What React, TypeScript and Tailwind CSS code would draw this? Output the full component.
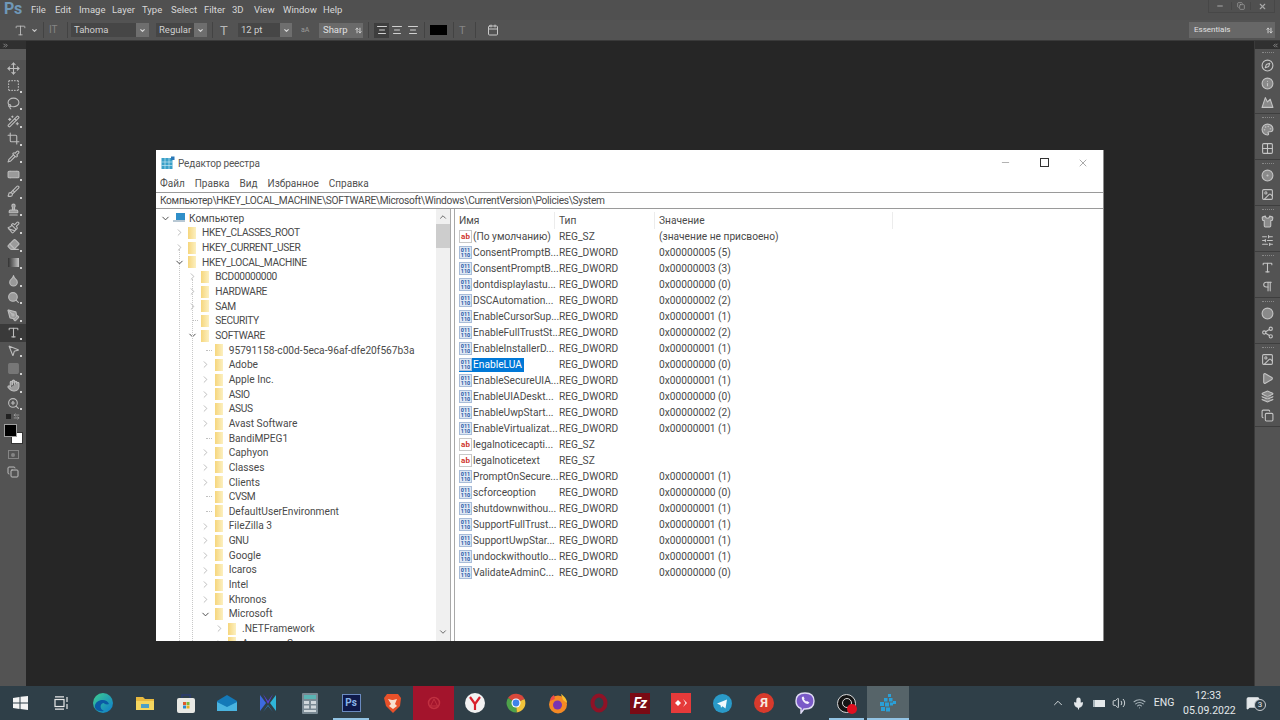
import React from "react";
import {
  Move, SquareDashed, Lasso, Wand2, Crop, Pipette, Bandage, Brush, Stamp, Paintbrush, Eraser, Droplet, PenTool, Type, MousePointer2, Hand, ZoomIn, Search,
  ChevronRight, ChevronDown, ChevronUp, Minus, Square, X, ChevronsLeft, ChevronsRight, ArrowLeftRight, Compass, Info, Mountain, Palette, Grid2x2, CircleDot, Image, Shirt, SlidersHorizontal, AlignCenter, Pilcrow, Circle, Share2, Play, Layers, Copy, Mic, Volume2, Wifi, MessageSquare, Calendar, ArrowUpDown
} from "lucide-react";

const menus = [
  ["File", "w-[24px]"], ["Edit", "w-[24px]"], ["Image", "w-[33px]"], ["Layer", "w-[30px]"], ["Type", "w-[29px]"], ["Select", "w-[33px]"], ["Filter", "w-[28px]"], ["3D", "w-[22px]"], ["View", "w-[29px]"], ["Window", "w-[40px]"], ["Help", "w-[30px]"],
];

function PsLogo() {
  return <span className="text-[#6f98b8] text-[16px] font-bold leading-none tracking-tight">Ps</span>;
}

function MenuBar() {
  return (
    <div className="h-[20px] bg-[#505050] flex items-center text-[9.5px] text-[#d8d8d8] shrink-0">
      <div className="w-[31px] pl-[4px]"><PsLogo /></div>
      {menus.map(([m, w]) => <span key={m} className={w}>{m}</span>)}
      <div className="ml-auto mr-[5px] self-start h-[13px] w-[67px] flex items-center border border-t-0 border-[#474747] text-[#a8a8a8]">
        <span className="w-[22px] flex justify-center"><Minus size={8} strokeWidth={3} /></span>
        <span className="w-[20px] flex justify-center border-x border-[#474747]"><Copy size={8} strokeWidth={2} /></span>
        <span className="flex-1 flex justify-center"><X size={9} strokeWidth={3} /></span>
      </div>
    </div>
  );
}

function Sel({ label, w, btn }: { label: string; w: string; btn: string }) {
  return (
    <div className={`${w} h-[14px] bg-[#464646] flex items-center text-[9.5px] text-[#d0d0d0]`}>
      <span className="pl-[3px] flex-1">{label}</span>
      <span className={`${btn} h-[14px] bg-[#6e6e6e] flex items-center justify-center`}>
        <ChevronDown size={7} strokeWidth={4} className="text-[#d8d8d8]" />
      </span>
    </div>
  );
}

function Sep({ cls }: { cls: string }) {
  return <div className={`w-px h-[16px] bg-[#434343] ${cls}`} />;
}

function OptionsBar() {
  return (
    <div className="h-[21px] bg-[#535353] flex items-center shrink-0 border-b border-[#3a3a3a]">
      <Type size={13} className="ml-[14px] text-[#c8c8c8]" strokeWidth={1.5} />
      <ChevronDown size={7} strokeWidth={4} className="ml-[4px] text-[#c8c8c8]" />
      <Sep cls="ml-[5px]" />
      <span className="ml-[5px] text-[#858585] text-[10px] w-[14px] leading-none">IT</span>
      <Sep cls="ml-[4px]" />
      <div className="ml-[3px]"><Sel label="Tahoma" w="w-[78px]" btn="w-[13px]" /></div>
      <div className="ml-[7px]"><Sel label="Regular" w="w-[51px]" btn="w-[13px]" /></div>
      <Sep cls="ml-[5px]" />
      <span className="ml-[7px] text-[#b8b8b8] text-[13px] leading-none w-[12px]">T</span>
      <div className="ml-[6px]"><Sel label="12 pt" w="w-[54px]" btn="w-[12px]" /></div>
      <span className="ml-[9px] text-[#9a9a9a] text-[7px] w-[10px]">aA</span>
      <div className="ml-[8px] w-[44px] h-[15px] bg-[#6a6a6a] flex items-center text-[9.5px] text-[#e0e0e0] pl-[4px]">
        <span className="flex-1">Sharp</span>
        <ArrowUpDown size={7} className="mr-[1px]" strokeWidth={3} />
      </div>
      <Sep cls="ml-[5px]" />
      <span className="ml-[5px] w-[15px] h-[15px] bg-[#3e3e3e] flex items-center justify-center"><AlignCenter size={12} className="text-[#d0d0d0]" /></span>
      <AlignCenter size={12} className="ml-[2px] text-[#d0d0d0]" />
      <AlignCenter size={12} className="ml-[4px] text-[#d0d0d0]" />
      <Sep cls="ml-[5px]" />
      <div className="ml-[5px] w-[17px] h-[10px] bg-black" />
      <Sep cls="ml-[6px]" />
      <span className="ml-[5px] text-[#858585] text-[11px] w-[10px] leading-none">T</span>
      <Sep cls="ml-[6px]" />
      <Calendar size={12} className="ml-[11px] text-[#c8c8c8]" />
      <div className="ml-auto mr-[5px] w-[86px] h-[16px] bg-[#676767] flex items-center text-[8px] text-[#e0e0e0] pl-[5px]">
        <span className="flex-1">Essentials</span>
        <ArrowUpDown size={7} className="mr-[2px]" strokeWidth={3} />
      </div>
    </div>
  );
}

const toolIcons = [Move, SquareDashed, Lasso, Wand2, Crop, Pipette, Bandage, Brush, Stamp, Paintbrush, Eraser, null, Droplet, Search, PenTool, Type, MousePointer2, Square, Hand, ZoomIn];
const filledTools = [6, 8, 10, 12, 13, 14, 18];

function LeftBar() {
  return (
    <div className="w-[26px] bg-[#535353] shrink-0 flex flex-col items-center">
      <div className="h-[8px] w-full bg-[#303030] flex items-center pl-[2px]"><ChevronsRight size={7} className="text-[#c0c0c0]" /></div>
      <div className="h-[10.5px] w-full bg-[#5a5a5a] shrink-0" />
      {toolIcons.map((I, i) => (
        <div key={i} className={`relative h-[17.65px] w-full flex items-center justify-center shrink-0 ${i === 15 ? "bg-[#3a3a3a]" : ""}`}>
          {I ? <I size={13} strokeWidth={2} className={i === 17 ? "text-[#777777] fill-[#777777]" : filledTools.includes(i) ? "text-[#bdbdbd] fill-[#9a9a9a]" : "text-[#bdbdbd]"} /> : <div className="w-[11px] h-[9px] bg-gradient-to-r from-[#333333] to-[#c8c8c8]" />}
          {i > 0 && <div className="absolute right-[4px] bottom-[2px] w-[2px] h-[2px] bg-[#d0d0d0]" />}
        </div>
      ))}
      <div className="h-[9px] w-full flex items-center justify-center gap-[2px] shrink-0"><div className="w-[5px] h-[5px] bg-[#222222]" /><ArrowLeftRight size={7} className="text-[#c0c0c0]" /></div>
      <div className="relative w-[22px] h-[20px] mt-[3px] shrink-0">
        <div className="absolute left-[9px] bottom-0 w-[12px] h-[12px] bg-white border border-[#333333]" />
        <div className="absolute left-[2px] top-0 w-[13px] h-[13px] bg-black border border-[#a0a0a0]" />
      </div>
      <div className="mt-[6px] w-[11px] h-[9px] border border-[#858585] flex items-center justify-center shrink-0"><div className="w-[4px] h-[4px] rounded-full bg-[#858585]" /></div>
      <Copy size={12} className="mt-[7px] text-[#bdbdbd] shrink-0" />
    </div>
  );
}

const rightGroups: [typeof Info, boolean][][] = [
  [[Compass, false], [Info, true], [Mountain, true]],
  [[Palette, true], [Grid2x2, false]],
  [[CircleDot, true], [Image, false]],
  [[Shirt, true], [SlidersHorizontal, false]],
  [[Type, false], [Pilcrow, false]],
  [[Circle, true], [Share2, false]],
  [[Image, false], [Play, true], [Layers, true], [Copy, false]],
];

function RightBar() {
  return (
    <div className="w-[26px] bg-[#535353] shrink-0 flex flex-col items-center border-l border-[#3a3a3a]">
      <div className="h-[8px] w-full bg-[#303030] flex items-center justify-end pr-[1px] shrink-0"><ChevronsLeft size={7} className="text-[#c0c0c0]" /></div>
      {rightGroups.map((g, i) => (
        <div key={i} className="w-full border-b border-[#3e3e3e] flex flex-col items-center pt-[3px] pb-[1px]">
          <div className="w-[12px] h-[2px] border-t border-dotted border-[#888888] mb-[2px]" />
          {g.map(([I, filled], j) => (
            <div key={j} className="h-[18.5px] flex items-center justify-center">
              <I size={13} className={filled ? "text-[#c4c4c4] fill-[#8a8a8a]" : "text-[#c4c4c4]"} strokeWidth={2} />
            </div>
          ))}
        </div>
      ))}
    </div>
  );
}

const tree: [number, "r" | "d" | "n", string][] = [
  [1, "r", "HKEY_CLASSES_ROOT"], [1, "r", "HKEY_CURRENT_USER"], [1, "d", "HKEY_LOCAL_MACHINE"],
  [2, "r", "BCD00000000"], [2, "r", "HARDWARE"], [2, "r", "SAM"], [2, "n", "SECURITY"], [2, "d", "SOFTWARE"],
  [3, "n", "95791158-c00d-5eca-96af-dfe20f567b3a"], [3, "r", "Adobe"], [3, "r", "Apple Inc."], [3, "r", "ASIO"], [3, "r", "ASUS"], [3, "r", "Avast Software"], [3, "n", "BandiMPEG1"], [3, "r", "Caphyon"], [3, "r", "Classes"], [3, "r", "Clients"], [3, "n", "CVSM"], [3, "n", "DefaultUserEnvironment"], [3, "r", "FileZilla 3"], [3, "r", "GNU"], [3, "r", "Google"], [3, "r", "Icaros"], [3, "r", "Intel"], [3, "r", "Khronos"], [3, "d", "Microsoft"],
  [4, "r", ".NETFramework"], [4, "r", "Accessor Source"],
];
const levelPad = ["pl-[2px]", "pl-[16px]", "pl-[29.3px]", "pl-[42.7px]", "pl-[56px]"];

function Folder() {
  return <div className="ml-[2px] w-[8px] h-[12px] shrink-0 bg-gradient-to-r from-[#f6d67c] to-[#fcf0c0]" />;
}

function TreeRow({ level, mark, label }: { level: number; mark: "r" | "d" | "n"; label: string }) {
  return (
    <div className={`h-[14.67px] flex items-center ${levelPad[level]}`}>
      <span className="w-[14px] flex justify-center shrink-0">
        {mark === "r" && <ChevronRight size={11} strokeWidth={1.5} className="text-[#a0a0a0]" />}
        {mark === "d" && <ChevronDown size={11} strokeWidth={2} className="text-[#404040]" />}
        {mark === "n" && <span className="w-[6px] ml-[6px] border-t border-dotted border-[#c0c0c0]" />}
      </span>
      <Folder />
      <span className={`ml-[6px] whitespace-nowrap ${label === label.toUpperCase() ? "tracking-[-0.35px]" : ""}`}>{label}</span>
    </div>
  );
}

function Tree() {
  return (
    <div className="w-[280px] relative overflow-hidden pt-[2px] text-[10.2px] text-[#4a4a4a]">
      <div className="absolute left-[23px] top-[40px] bottom-0 border-l border-dotted border-[#c8c8c8]" />
      <div className="absolute left-[36px] top-[70px] bottom-0 border-l border-dotted border-[#c8c8c8]" />
      <div className="h-[14.67px] flex items-center pl-[2px]">
        <span className="w-[14px] flex justify-center"><ChevronDown size={11} strokeWidth={2} className="text-[#404040]" /></span>
        <svg width="14" height="12" viewBox="0 0 14 12" className="shrink-0"><rect x="4" y="1" width="9" height="7" fill="#2f8fc9" /><rect x="1" y="8" width="12" height="2" fill="#b8c8d4" /></svg>
        <span className="ml-[3px]">Компьютер</span>
      </div>
      {tree.map(([l, m, t]) => <TreeRow key={t} level={l} mark={m} label={t} />)}
    </div>
  );
}

function Scrollbar() {
  return (
    <div className="w-[14px] bg-[#f0f0f0] flex flex-col items-center shrink-0">
      <ChevronUp size={10} strokeWidth={2} className="text-[#505050] mt-[3px] mb-[2px]" />
      <div className="w-full h-[24px] bg-[#cdcdcd]" />
      <ChevronDown size={10} strokeWidth={2} className="text-[#505050] mt-auto mb-[4px]" />
    </div>
  );
}

const values: [string, string, string, string?][] = [
  ["ab", "(По умолчанию)", "REG_SZ", "(значение не присвоено)"],
  ["b", "ConsentPromptB...", "REG_DWORD", "0x00000005 (5)"],
  ["b", "ConsentPromptB...", "REG_DWORD", "0x00000003 (3)"],
  ["b", "dontdisplaylastu...", "REG_DWORD", "0x00000000 (0)"],
  ["b", "DSCAutomation...", "REG_DWORD", "0x00000002 (2)"],
  ["b", "EnableCursorSup...", "REG_DWORD", "0x00000001 (1)"],
  ["b", "EnableFullTrustSt...", "REG_DWORD", "0x00000002 (2)"],
  ["b", "EnableInstallerD...", "REG_DWORD", "0x00000001 (1)"],
  ["s", "EnableLUA", "REG_DWORD", "0x00000000 (0)"],
  ["b", "EnableSecureUIA...", "REG_DWORD", "0x00000001 (1)"],
  ["b", "EnableUIADeskt...", "REG_DWORD", "0x00000000 (0)"],
  ["b", "EnableUwpStart...", "REG_DWORD", "0x00000002 (2)"],
  ["b", "EnableVirtualizat...", "REG_DWORD", "0x00000001 (1)"],
  ["ab", "legalnoticecapti...", "REG_SZ"],
  ["ab", "legalnoticetext", "REG_SZ"],
  ["b", "PromptOnSecure...", "REG_DWORD", "0x00000001 (1)"],
  ["b", "scforceoption", "REG_DWORD", "0x00000000 (0)"],
  ["b", "shutdownwithou...", "REG_DWORD", "0x00000001 (1)"],
  ["b", "SupportFullTrust...", "REG_DWORD", "0x00000001 (1)"],
  ["b", "SupportUwpStar...", "REG_DWORD", "0x00000001 (1)"],
  ["b", "undockwithoutlo...", "REG_DWORD", "0x00000001 (1)"],
  ["b", "ValidateAdminC...", "REG_DWORD", "0x00000000 (0)"],
];

function RegIcon({ kind }: { kind: string }) {
  if (kind === "ab") {
    return <span className="w-[13px] h-[13px] shrink-0 border border-[#c8c8c8] bg-white text-[#d0342c] text-[8px] font-bold leading-[11px] text-center">ab</span>;
  }
  return (
    <span className="w-[13px] h-[13px] shrink-0 border border-[#a8bcd8] bg-[#dfe8f4] text-[#2a5aa8] text-[5.5px] font-bold leading-[5.5px] text-center overflow-hidden pt-[0.5px]">
      011<br />110
    </span>
  );
}

function ValueList() {
  return (
    <div className="flex-1 min-w-0 text-[10.2px] text-[#4a4a4a] pt-[3px] overflow-hidden">
      <div className="h-[16.5px] flex items-center">
        <span className="w-[100px] pl-[4px] h-full flex items-center border-r border-[#ececec]">Имя</span>
        <span className="w-[100px] pl-[4px] h-full flex items-center border-r border-[#ececec]">Тип</span>
        <span className="w-[238px] pl-[4px] h-full flex items-center border-r border-[#ececec]">Значение</span>
      </div>
      {values.map(([k, n, t, v], i) => (
        <div key={i} className="h-[16px] flex items-center">
          <div className="w-[100px] pl-[4px] flex items-center shrink-0">
            <div className={`flex items-center h-[14px] ${k === "s" ? "bg-[#0078d7] text-white pr-[2px]" : ""}`}>
              <RegIcon kind={k} />
              <span className="ml-[1px] whitespace-nowrap">{n}</span>
            </div>
          </div>
          <span className="w-[100px] pl-[4px] shrink-0">{t}</span>
          <span className="pl-[4px] whitespace-nowrap">{v}</span>
        </div>
      ))}
    </div>
  );
}

function RegWindow() {
  return (
    <div className="ml-[130px] mt-[109px] w-[948px] h-[491px] bg-white flex flex-col text-[#404040] border-r border-[#8a8a8a]">
      <div className="h-[25px] flex items-center shrink-0">
        <svg width="14" height="14" viewBox="0 0 14 14" className="ml-[5px]">
          <rect x="0.5" y="2" width="11" height="11" fill="#3aa0c8" />
          <path d="M0.5 6h11M0.5 9.500h11M4 2v11M8 2v11" stroke="#d8f0f8" strokeWidth="0.6" />
          <rect x="10" y="0.500" width="3.500" height="3.500" fill="#2a78b8" />
        </svg>
        <span className="ml-[3px] pt-[1px] text-[10px] tracking-[-0.15px] text-[#555555]">Редактор реестра</span>
        <div className="ml-auto flex items-center text-[#555555]">
          <Minus size={11} strokeWidth={1} className="mr-[29px]" />
          <div className="w-[9px] h-[9px] border border-[#333333] mr-[28px]" />
          <X size={12} strokeWidth={1} className="mr-[14px]" />
        </div>
      </div>
      <div className="h-[17px] flex items-center pl-[4px] gap-[10px] text-[10px] text-[#505050] shrink-0">
        <span>Файл</span><span>Правка</span><span>Вид</span><span>Избранное</span><span>Справка</span>
      </div>
      <div className="h-[17px] flex items-center pl-[4px] text-[10.2px] tracking-[-0.3px] text-[#4a4a4a] border-y border-[#9a9a9a] shrink-0 whitespace-nowrap">
        Компьютер\HKEY_LOCAL_MACHINE\SOFTWARE\Microsoft\Windows\CurrentVersion\Policies\System
      </div>
      <div className="flex-1 flex min-h-0">
        <Tree />
        <Scrollbar />
        <div className="w-[5px] bg-white border-x border-[#a8a8a8] shrink-0" />
        <ValueList />
      </div>
    </div>
  );
}

function Edge() {
  return <svg width="22" height="22" viewBox="0 0 22 22"><defs><linearGradient id="e1" x1="0" y1="0" x2="1" y2="1"><stop offset="0" stopColor="#3ecf8e" /><stop offset="1" stopColor="#0c79d0" /></linearGradient></defs><circle cx="11" cy="11" r="10" fill="url(#e1)" /><path d="M3 13c2-6 12-7 14-1-2 1-5 0-5-1-4 0-5 6 0 8-6 1-10-2-9-6z" fill="#0b5aa5" /></svg>;
}
function Explorer() {
  return <svg width="20" height="18" viewBox="0 0 20 18"><path d="M1 3h7l2 2h9v11H1z" fill="#e8b93f" /><rect x="1" y="7" width="18" height="9" fill="#f5d65f" /><rect x="6" y="10" width="8" height="4" fill="#4da0c8" /></svg>;
}
function Store() {
  return <svg width="20" height="21" viewBox="0 0 20 21"><path d="M6 5V2h8v3" fill="none" stroke="#2a3a70" strokeWidth="1.400" /><rect x="1" y="5" width="18" height="15" rx="2" fill="#e8e8e4" /><rect x="7" y="9" width="3" height="3" fill="#e05a2c" /><rect x="10.500" y="9" width="3" height="3" fill="#7db83a" /><rect x="7" y="12.500" width="3" height="3" fill="#2a8ad0" /><rect x="10.500" y="12.500" width="3" height="3" fill="#e8b020" /></svg>;
}
function Mail() {
  return <svg width="22" height="18" viewBox="0 0 22 18"><path d="M1 7L11 1l10 6v10H1z" fill="#1479b8" /><path d="M1 8l10 5 10-5v9H1z" fill="#4ab4e0" /></svg>;
}
function VS() {
  return <svg width="18" height="20" viewBox="0 0 18 20"><path d="M1 2l6 8-6 8z" fill="#3d6be0" /><path d="M17 2l-6 8 6 8z" fill="#2fb5d8" /><path d="M4 1l5 7 5-7-5 10z" fill="#5a3fd0" /><path d="M4 19l5-7 5 7-5-6z" fill="#2a8ad0" /></svg>;
}
function Calc() {
  return <svg width="16" height="21" viewBox="0 0 16 21"><rect width="16" height="21" rx="1" fill="#7a8a94" /><rect x="2" y="2" width="12" height="4" fill="#5ab4b4" /><rect x="2" y="8" width="5" height="3" fill="#d0d8dc" /><rect x="9" y="8" width="5" height="3" fill="#d0d8dc" /><rect x="2" y="12.500" width="5" height="3" fill="#d0d8dc" /><rect x="9" y="12.500" width="5" height="3" fill="#d0d8dc" /><rect x="2" y="17" width="12" height="2" fill="#d0d8dc" /></svg>;
}
function PsIcon() {
  return <div className="w-[19px] h-[18px] bg-[#0f1a4a] border border-[#6a8ac0] text-[#8ab4e8] text-[10px] font-bold leading-[16px] text-center">Ps</div>;
}
function Brave() {
  return <svg width="17" height="20" viewBox="0 0 17 20"><path d="M3 1h11l3 4-1 8-7 7-7-7-2-8z" fill="#e8512a" /><path d="M4 6l4 1 1 0 4-1-2 5 2 2-4 3-4-3 2-2z" fill="#f8e0d0" /></svg>;
}
function RedBlock() {
  return <svg width="14" height="14" viewBox="0 0 14 14"><circle cx="7" cy="7" r="5.500" fill="none" stroke="#c03040" strokeWidth="1.500" /><path d="M7 3L3.500 10h7z" fill="none" stroke="#c03040" /></svg>;
}
function Yandex() {
  return <svg width="20" height="20" viewBox="0 0 20 20"><circle cx="10" cy="10" r="10" fill="#f2f2f2" /><path d="M5 4l5 7 5-7M10 11v6" fill="none" stroke="#d9202c" strokeWidth="2.200" /></svg>;
}
function Chrome() {
  return <svg width="20" height="20" viewBox="0 0 20 20"><path d="M10 10L2 5A9.500 9.500 0 0 1 18.500 6z" fill="#d9483b" /><path d="M10 10l8.500-4a9.500 9.500 0 0 1-8 13.500z" fill="#f2c43a" /><path d="M10 10l.5 9.500A9.500 9.500 0 0 1 2 5z" fill="#4ea24a" /><circle cx="10" cy="10" r="4.500" fill="#fff" /><circle cx="10" cy="10" r="3.400" fill="#3f83e8" /></svg>;
}
function Firefox() {
  return <svg width="20" height="21" viewBox="0 0 20 21"><circle cx="10" cy="11.500" r="9" fill="#f58a24" /><path d="M13 1c3 2 6 5 6 9l-4-3z" fill="#f8c030" /><circle cx="9.500" cy="12" r="4.500" fill="#7a35b0" /><path d="M2 8c0-3 2-5 4-6l1 4z" fill="#f04a4a" /></svg>;
}
function Opera() {
  return <svg width="20" height="20" viewBox="0 0 20 20"><ellipse cx="10" cy="10" rx="6.500" ry="7.500" fill="none" stroke="#8f1226" strokeWidth="4" /></svg>;
}
function Fz() {
  return <div className="w-[20px] h-[21px] bg-[#7a0a14] text-white text-[14px] font-bold italic leading-[20px] text-center tracking-tighter">Fz</div>;
}
function AnyDesk() {
  return <svg width="20" height="20" viewBox="0 0 20 20"><rect width="20" height="20" fill="#e53a3a" /><path d="M7 7l3 3-3 3-3-3z" fill="#fff" /><path d="M12 6l4 4-4 4 2.500-4z" fill="#fff" /></svg>;
}
function Telegram() {
  return <svg width="19" height="19" viewBox="0 0 19 19"><circle cx="9.500" cy="9.500" r="9.500" fill="#2a9ac8" /><path d="M4 9.500l10-4-1.500 9-3-2.200-1.500 1.500-.5-2.500z" fill="#f0f8fc" /></svg>;
}
function Ya() {
  return <div className="w-[20px] h-[20px] rounded-full bg-[#d83a2c] text-[#f8e8e0] text-[13px] font-bold leading-[20px] text-center">Я</div>;
}
function Viber() {
  return <svg width="20" height="22" viewBox="0 0 20 22"><path d="M10 1c6 0 9 3 9 8s-3 8-9 8H9l-3 4v-4.500C2 15 1 13 1 9c0-5 3-8 9-8z" fill="#7a5ac8" stroke="#e0dcf4" strokeWidth="1.400" /><path d="M7 5c-1 2 2 7 6 7l1.500-1.500L12 9l-1 .5L9 7.500l.5-1L8.500 4.500z" fill="#f4f0fc" /></svg>;
}
function Obs() {
  return <div className="relative w-[19px] h-[19px] rounded-full bg-[#141414] border border-[#d8d8d8]"><div className="absolute left-[4px] top-[3px] w-[10px] h-[10px] rounded-full border border-[#d8d8d8]" /><div className="absolute -right-[2px] -bottom-[2px] w-[10px] h-[10px] rounded-full bg-[#e01020]" /></div>;
}
function Cubes() {
  return <svg width="18" height="20" viewBox="0 0 18 20" fill="#2aa0d8"><rect x="9" y="1" width="3" height="3" /><rect x="5" y="5" width="3.500" height="3.500" /><rect x="10" y="5" width="3.500" height="3.500" /><rect x="14" y="8" width="3" height="3" /><rect x="1" y="9" width="4" height="4" /><rect x="6" y="9.500" width="4" height="4" /><rect x="11" y="9.500" width="3" height="3" /><rect x="2" y="14" width="4" height="4" /><rect x="7" y="14.500" width="4" height="4" /></svg>;
}
function Win() {
  return <svg width="15" height="14" viewBox="0 0 15 14" fill="#f4f4f4"><path d="M0 2l6.500-1v5.500H0zM7.500 .800L15 0v6.500H7.500zM0 7.500h6.500V13L0 12zM7.500 7.500H15V14l-7.500-.9z" /></svg>;
}
function TaskView() {
  return <svg width="15" height="14" viewBox="0 0 15 14" fill="none" stroke="#e8e8e8" strokeWidth="1.200"><rect x="1" y="3.500" width="9" height="7" /><path d="M1 .8h9M1 13.200h9M13 1v5M13 8v5" /></svg>;
}

const taskItems: [React.ReactNode, string][] = [
  [<Win />, ""], [<TaskView />, ""], [<Edge />, ""], [<Explorer />, ""], [<Store />, ""], [<Mail />, ""], [<VS />, ""], [<Calc />, ""],
  [<PsIcon />, "run"], [<Brave />, ""], [<RedBlock />, "red"], [<Yandex />, ""], [<Chrome />, ""], [<Firefox />, ""], [<Opera />, ""], [<Fz />, ""], [<AnyDesk />, ""], [<Telegram />, ""], [<Ya />, ""], [<Viber />, ""], [<Obs />, "run"], [<Cubes />, "active"],
];

function Taskbar() {
  return (
    <div className="h-[34px] bg-[#2f3f48] flex items-stretch shrink-0 text-[#e4e8ea]">
      {taskItems.map(([node, st], i) => (
        <div key={i} className={`relative w-[41.3px] shrink-0 flex items-center justify-center ${st === "active" ? "bg-[#566469]" : ""} ${st === "red" ? "bg-[#a3142c]" : ""}`}>
          {node}
          {(st === "run" || st === "active") && <div className={`absolute bottom-0 h-[2px] bg-[#93c4e4] ${st === "active" ? "inset-x-0" : "inset-x-[3px]"}`} />}
        </div>
      ))}
      <div className="ml-auto flex items-center">
        <span className="w-[14px] flex justify-center mr-[6px]"><ChevronUp size={14} strokeWidth={1.5} /></span>
        <span className="w-[14px] flex justify-center mr-[7px]"><Mic size={13} fill="#e4e8ea" /></span>
        <span className="w-[14px] flex justify-center mr-[6px]"><span className="w-[12px] h-[7px] bg-[#e4e8ea] border-l-2 border-[#a8b4ba]" /></span>
        <span className="w-[14px] flex justify-center mr-[6px]"><Volume2 size={14} strokeWidth={1.5} /></span>
        <span className="w-[14px] flex justify-center mr-[7px]"><Wifi size={13} strokeWidth={2} className="text-[#a8b4ba]" /></span>
        <span className="text-[10.5px] w-[22px] mr-[8px] text-center">ENG</span>
        <div className="w-[50px] text-center text-[10.5px] leading-[15px]">
          <div>12:33</div>
          <div>05.09.2022</div>
        </div>
        <div className="relative w-[40px] flex justify-center mr-[7px]">
          <MessageSquare size={14} fill="#e4e8ea" />
          <span className="absolute left-[21px] top-[3px] w-[12px] h-[12px] rounded-full bg-[#2f3f48] border border-[#c8ccd0] text-[8px] leading-[10px] text-center">3</span>
        </div>
      </div>
    </div>
  );
}

export default function App() {
  return (
    <div className="w-[1280px] h-[720px] overflow-hidden flex flex-col bg-[#262626] font-['Roboto','Noto_Sans',sans-serif]">
      <MenuBar />
      <OptionsBar />
      <div className="flex-1 min-h-0 flex">
        <LeftBar />
        <div className="flex-1 min-w-0 bg-[#262626] overflow-hidden">
          <RegWindow />
        </div>
        <RightBar />
      </div>
      <Taskbar />
    </div>
  );
}
